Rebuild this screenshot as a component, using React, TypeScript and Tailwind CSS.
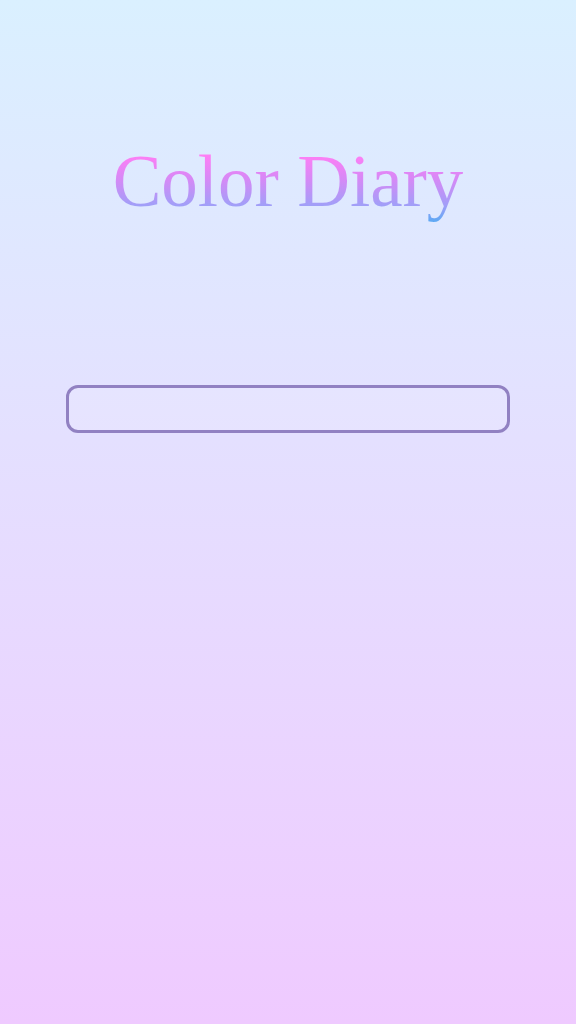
import React from "react";

export default function App() {
  return (
    <div className="min-h-[1024px] w-full bg-gradient-to-b from-[#daf0ff] to-[#efcaff] flex flex-col items-center">
      <h1
        className="mt-[137px] text-[73px] leading-[90px] bg-[linear-gradient(180deg,#ff7ef5_20%,#d48af6_48%,#a19ff8_76%,#5ea9f4_94%)] bg-clip-text text-transparent"
        style={{ fontFamily: '"Liberation Serif", "Times New Roman", serif' }}
      >
        Color Diary
      </h1>
      <input
        type="text"
        className="mt-[158px] w-[444px] h-[48px] rounded-[12px] border-[3px] border-[#9181c2] bg-white/10 outline-none px-3"
      />
    </div>
  );
}
